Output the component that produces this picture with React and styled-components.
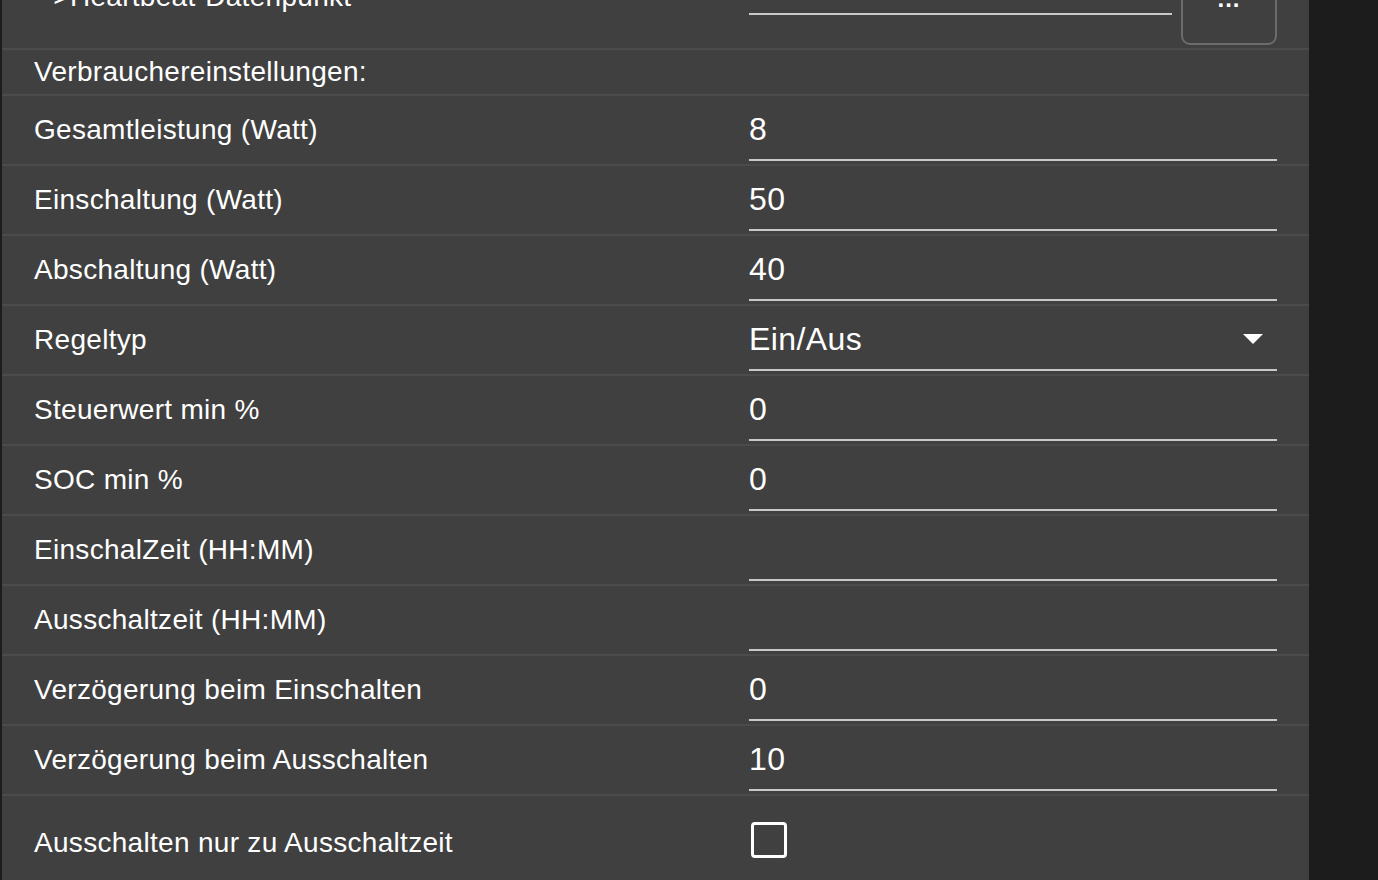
import styled, { createGlobalStyle } from "styled-components";

const GlobalStyle = createGlobalStyle`
    html, body {
        margin: 0;
        padding: 0;
        background-color: #1c1c1c;
        overflow: hidden;
    }
    body {
        font-family: "Liberation Sans", Arial, sans-serif;
    }
`;

const fields = [
    { label: "Gesamtleistung (Watt)", value: "8" },
    { label: "Einschaltung (Watt)", value: "50" },
    { label: "Abschaltung (Watt)", value: "40" },
    { label: "Regeltyp", value: "Ein/Aus", select: true },
    { label: "Steuerwert min %", value: "0" },
    { label: "SOC min %", value: "0" },
    { label: "EinschalZeit (HH:MM)", value: "" },
    { label: "Ausschaltzeit (HH:MM)", value: "" },
    { label: "Verzögerung beim Einschalten", value: "0" },
    { label: "Verzögerung beim Ausschalten", value: "10" },
];

export default function App() {
    return (
        <>
            <GlobalStyle />
            <Page>
                <Panel>
                    <TopRow>
                        <Label>--&gt;Heartbeat-Datenpunkt</Label>
                        <PickerCell>
                            <PickerInput type="text" defaultValue="" />
                            <DotsButton type="button">...</DotsButton>
                        </PickerCell>
                    </TopRow>
                    <HeaderRow>
                        <Label>Verbrauchereinstellungen:</Label>
                    </HeaderRow>
                    {fields.map((f) => (
                        <Row key={f.label}>
                            <Label>{f.label}</Label>
                            {f.select ? (
                                <SelectBox>
                                    <span>{f.value}</span>
                                    <Caret />
                                </SelectBox>
                            ) : (
                                <ValueInput type="text" defaultValue={f.value} />
                            )}
                        </Row>
                    ))}
                    <CheckRow>
                        <Label>Ausschalten nur zu Ausschaltzeit</Label>
                        <CheckBox type="button" aria-label="Ausschalten nur zu Ausschaltzeit" />
                    </CheckRow>
                </Panel>
            </Page>
        </>
    );
}

const Page = styled.div`
    display: flex;
    align-items: flex-start;
    width: 1378px;
    height: 880px;
    overflow: hidden;
    background-color: #1c1c1c;
`;

const Panel = styled.div`
    margin-left: 2px;
    margin-top: -54px;
    width: 1307px;
    flex-shrink: 0;
    background-color: #404040;
    display: flex;
    flex-direction: column;
`;

const BaseRow = styled.div`
    display: grid;
    grid-template-columns: 715px 528px;
    padding: 0 32px;
    align-items: center;
    flex-shrink: 0;
    border-top: 2px solid #4b4b4b;
`;

const TopRow = styled(BaseRow)`
    height: 102px;
    border-top: none;
`;

const HeaderRow = styled(BaseRow)`
    height: 44px;
`;

const Row = styled(BaseRow)`
    height: 68px;
`;

const CheckRow = styled(BaseRow)`
    height: 94px;
`;

const Label = styled.div`
    color: #ffffff;
    font-size: 28px;
    line-height: 34px;
    letter-spacing: 0.3px;
    white-space: nowrap;
`;

const PickerCell = styled.div`
    display: flex;
    align-items: center;
    gap: 9px;
`;

const fieldLine = `
    box-sizing: border-box;
    border: none;
    border-bottom: 2px solid #c9c9c9;
    background: transparent;
    color: #ffffff;
    font-family: "Liberation Sans", Arial, sans-serif;
    font-size: 32px;
    letter-spacing: 0.4px;
    outline: none;
    margin: 0;
`;

const PickerInput = styled.input`
    ${fieldLine}
    width: 423px;
    height: 36px;
    padding: 0;
`;

const DotsButton = styled.button`
    box-sizing: border-box;
    width: 96px;
    height: 96px;
    border: 2px solid #6b6b6b;
    border-radius: 9px;
    background: transparent;
    color: #ffffff;
    font-family: "Liberation Sans", Arial, sans-serif;
    font-size: 24px;
    font-weight: 700;
    padding: 4px 0 0;
    letter-spacing: 1px;
`;

const ValueInput = styled.input`
    ${fieldLine}
    align-self: end;
    width: 528px;
    height: 56px;
    padding: 0 0 6px;
    margin-bottom: 3px;
`;

const SelectBox = styled.div`
    ${fieldLine}
    align-self: end;
    width: 528px;
    height: 56px;
    padding: 0 14px 6px 0;
    margin-bottom: 3px;
    display: flex;
    align-items: center;
    justify-content: space-between;
`;

const Caret = styled.span`
    width: 0;
    height: 0;
    border-left: 10px solid transparent;
    border-right: 10px solid transparent;
    border-top: 10px solid #ffffff;
`;

const CheckBox = styled.button`
    box-sizing: border-box;
    width: 36px;
    height: 36px;
    margin: -7px 0 0 2px;
    border: 3px solid #ffffff;
    border-radius: 4px;
    background: transparent;
    padding: 0;
`;
